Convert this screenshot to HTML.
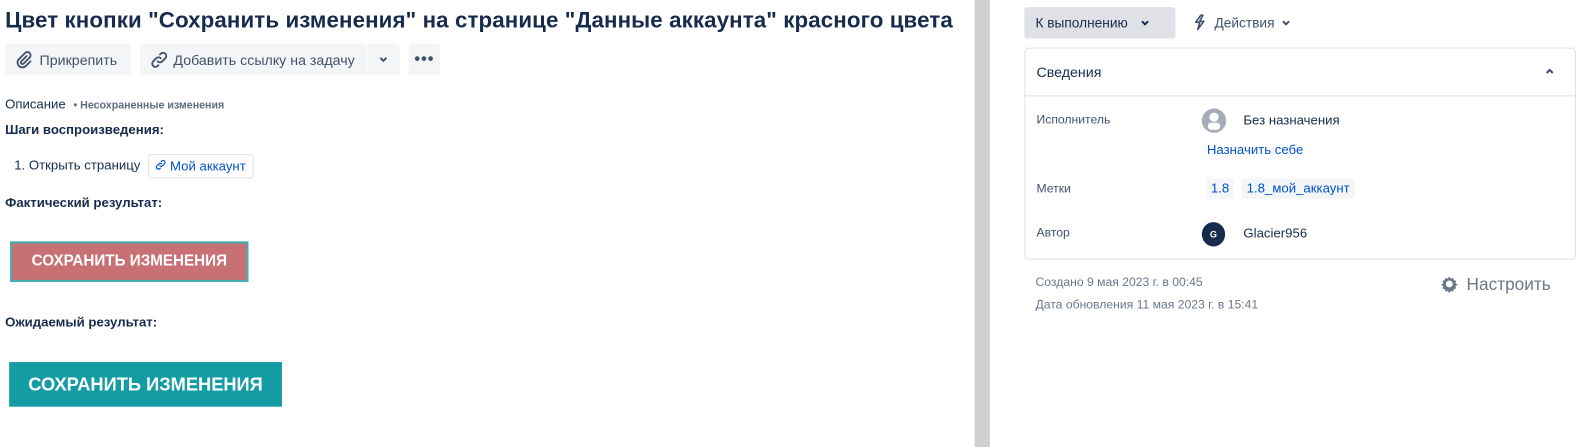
<!DOCTYPE html>
<html><head><meta charset="utf-8"><style>
*{margin:0;padding:0;box-sizing:border-box}
body{width:1590px;height:441px;overflow:hidden;background:#fff;font-family:"Liberation Sans","DejaVu Sans",sans-serif;color:#172b4d;position:relative}
#w{position:absolute;left:0;top:0;width:1568px;height:435px;transform:scale(1.0142);transform-origin:0 0}
.a{position:absolute;white-space:nowrap}
.btn{position:absolute;background:#f4f5f7;border-radius:3px;height:31px;font-size:14px;color:#42526e;display:flex;align-items:center}
.lbl{font-size:12px;color:#42526e}
</style></head><body><div id="w">
<div class="a" style="left:5px;top:7px;font-size:22px;font-weight:600;letter-spacing:0.1px">Цвет кнопки "Сохранить изменения" на странице "Данные аккаунта" красного цвета</div>

<div class="btn" style="left:5px;top:43px;width:124px;padding-left:10px">
<svg width="18" height="18" viewBox="0 0 24 24" fill="none" stroke="#42526e" stroke-width="2.4" stroke-linecap="round"><path d="M15 7l-7 7a2 2 0 0 0 3 3l8-8a4 4 0 0 0-6-6l-8 8a6 6 0 0 0 9 9l6-6"/></svg>
<span style="margin-left:6px">Прикрепить</span></div>
<div class="btn" style="left:138px;top:43px;width:223px;padding-left:10px;border-radius:3px 0 0 3px">
<svg width="18" height="18" viewBox="0 0 24 24" fill="none" stroke="#42526e" stroke-width="2.4" stroke-linecap="round"><path d="M10 14a4 4 0 0 0 6 0l4-4a4 4 0 0 0-6-6l-1 1M14 10a4 4 0 0 0-6 0l-4 4a4 4 0 0 0 6 6l1-1"/></svg>
<span style="margin-left:5px">Добавить ссылку на задачу</span></div>
<div class="btn" style="left:362px;top:43px;width:32px;justify-content:center;border-radius:0 3px 3px 0"><svg width="10" height="8" viewBox="0 0 10 8"><path d="M2 2l3 3 3-3" stroke="#42526e" stroke-width="2" fill="none"/></svg></div>
<div class="btn" style="left:403px;top:43px;width:31px;justify-content:center;font-weight:bold;font-size:16px;letter-spacing:1px">•••</div>

<div class="a" style="left:5px;top:95px;font-size:13px">Описание <span style="font-size:10.5px;color:#5e6c84;font-weight:600;margin-left:4px">• Несохраненные изменения</span></div>
<div class="a" style="left:5px;top:120px;font-size:13px;font-weight:bold">Шаги воспроизведения:</div>
<div class="a" style="left:14px;top:155px;font-size:13px">1. Открыть страницу</div>
<div class="a" style="left:146px;top:152px;width:104px;height:24px;border:1px solid #dfe1e6;border-radius:3px;font-size:13px;color:#0052cc;padding:3px 0 0 6px"><svg width="11" height="11" viewBox="0 0 24 24" fill="none" stroke="#0052cc" stroke-width="2.6" stroke-linecap="round"><path d="M10 14a4 4 0 0 0 6 0l4-4a4 4 0 0 0-6-6l-1 1M14 10a4 4 0 0 0-6 0l-4 4a4 4 0 0 0 6 6l1-1"/></svg> Мой аккаунт</div>
<div class="a" style="left:5px;top:192px;font-size:13px;font-weight:bold">Фактический результат:</div>
<div class="a" style="left:10px;top:238px;width:235px;height:40px;background:#c87174;border:2px solid #3fb0b5;color:#fff;font-weight:bold;font-size:15px;text-align:center;line-height:36px">СОХРАНИТЬ ИЗМЕНЕНИЯ</div>
<div class="a" style="left:5px;top:310px;font-size:13px;font-weight:bold">Ожидаемый результат:</div>
<div class="a" style="left:9px;top:357px;width:269px;height:44px;background:#139ca3;color:#fff;font-weight:bold;font-size:18px;text-align:center;line-height:44px">СОХРАНИТЬ ИЗМЕНЕНИЯ</div>

<div class="a" style="left:961px;top:0;width:15px;height:441px;background:#cfcfcf"></div>

<div class="a" style="left:1010px;top:7px;width:149px;height:31px;background:#dfe1e6;border-radius:3px;font-size:13.5px;padding:8px 0 0 11px;color:#172b4d">К выполнению <svg width="10" height="8" viewBox="0 0 10 8" style="margin-left:8px"><path d="M2 2l3 3 3-3" stroke="#172b4d" stroke-width="2" fill="none"/></svg></div>
<div class="a" style="left:1176px;top:14px;font-size:13.5px;color:#42526e"><svg width="14" height="16" viewBox="0 0 14 16" style="vertical-align:-3px"><path d="M8 1L3 8h4l-2 7 6-8H7l3-6z" stroke="#42526e" stroke-width="1.6" fill="none" stroke-linejoin="round"/></svg> &nbsp;Действия <svg width="10" height="8" viewBox="0 0 10 8" style="margin-left:3px"><path d="M2 2l3 3 3-3" stroke="#42526e" stroke-width="2" fill="none"/></svg></div>

<div class="a" style="left:1010px;top:47px;width:544px;height:209px;border:1px solid #dfe1e6;border-radius:4px"></div>
<div class="a" style="left:1011px;top:94px;width:542px;height:1px;background:#dfe1e6"></div>
<div class="a" style="left:1022px;top:63px;font-size:14px">Сведения</div>
<svg class="a" style="left:1523px;top:66px" width="10" height="8" viewBox="0 0 10 8"><path d="M2 6l3-3 3 3" stroke="#42526e" stroke-width="2" fill="none"/></svg>

<div class="a lbl" style="left:1022px;top:111px">Исполнитель</div>
<svg class="a" style="left:1185px;top:107px" width="24" height="24" viewBox="0 0 24 24"><circle cx="12" cy="12" r="12" fill="#a5adba"/><circle cx="12" cy="8.5" r="4.5" fill="#fff"/><rect x="6" y="14" width="12" height="7" rx="3" fill="#fff"/></svg>
<div class="a" style="left:1226px;top:111px;font-size:13px">Без назначения</div>
<div class="a" style="left:1190px;top:140px;font-size:13px;color:#0052cc">Назначить себе</div>

<div class="a lbl" style="left:1022px;top:179px">Метки</div>
<div class="a" style="left:1190px;top:176px;width:26px;height:20px;background:#f4f5f7;border-radius:3px;font-size:13px;color:#0052cc;text-align:center;line-height:19px">1.8</div>
<div class="a" style="left:1224px;top:176px;width:112px;height:20px;background:#f4f5f7;border-radius:3px;font-size:13px;color:#0052cc;text-align:center;line-height:19px">1.8_мой_аккаунт</div>

<div class="a lbl" style="left:1022px;top:222px">Автор</div>
<div class="a" style="left:1185px;top:219px;width:23px;height:24px;border-radius:50%;background:#172b4d;color:#fff;font-size:9px;font-weight:bold;text-align:center;line-height:24px">G</div>
<div class="a" style="left:1226px;top:222px;font-size:13px">Glacier956</div>

<div class="a" style="left:1021px;top:271px;font-size:12px;color:#6b778c">Создано 9 мая 2023 г. в 00:45</div>
<div class="a" style="left:1021px;top:293px;font-size:12px;color:#6b778c">Дата обновления 11 мая 2023 г. в 15:41</div>
<svg class="a" style="left:1420px;top:271px" width="18" height="18" viewBox="0 0 24 24"><path d="M12 2l2 3 3-1 1 3 3 1-1 3 3 2-3 2 1 3-3 1-1 3-3-1-2 3-2-3-3 1-1-3-3-1 1-3-3-2 3-2-1-3 3-1 1-3 3 1z" fill="#6b778c"/><circle cx="12" cy="12" r="4.5" fill="#fff"/></svg>
<div class="a" style="left:1446px;top:271px;font-size:17px;color:#6b778c">Настроить</div>
</div></body></html>
